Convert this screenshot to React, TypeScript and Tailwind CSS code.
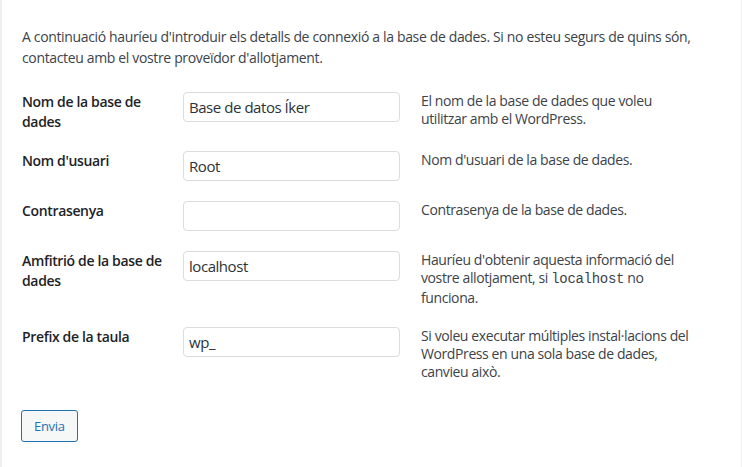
import React from 'react';

const font = { fontFamily: '"Segoe UI", "Open Sans", "Noto Sans", sans-serif' };

interface Row {
  label: React.ReactNode;
  value: string;
  description: React.ReactNode;
}

const rows: Row[] = [
  {
    label: (
      <>
        Nom de la base de
        <br />
        dades
      </>
    ),
    value: 'Base de datos Íker',
    description: (
      <>
        El nom de la base de dades que voleu
        <br />
        utilitzar amb el WordPress.
      </>
    ),
  },
  {
    label: "Nom d'usuari",
    value: 'Root',
    description: "Nom d'usuari de la base de dades.",
  },
  {
    label: 'Contrasenya',
    value: '',
    description: 'Contrasenya de la base de dades.',
  },
  {
    label: (
      <>
        Amfitrió de la base de
        <br />
        dades
      </>
    ),
    value: 'localhost',
    description: (
      <>
        Hauríeu d'obtenir aquesta informació del
        <br />
        vostre allotjament, si{' '}
        <code className="font-['Liberation_Mono',monospace] text-[14px] tracking-[-0.3px]">localhost</code> no
        <br />
        funciona.
      </>
    ),
  },
  {
    label: 'Prefix de la taula',
    value: 'wp_',
    description: (
      <>
        Si voleu executar múltiples instal·lacions del
        <br />
        WordPress en una sola base de dades,
        <br />
        canvieu això.
      </>
    ),
  },
];

export default function App() {
  return (
    <div className="min-h-screen bg-[#f0f0f1] flex" style={font}>
      <div className="ml-[2px] w-[739px] min-h-[467px] bg-white pl-[20px] pt-[26px] text-[#3c434a] tracking-[-0.35px]">
        <p className="text-[14px] leading-[21px] mb-[14px]">
          A continuació hauríeu d'introduir els detalls de connexió a la base de dades. Si no esteu segurs de quins són,
          <br />
          contacteu amb el vostre proveïdor d'allotjament.
        </p>

        <div className="flex flex-col">
          {rows.map((row, i) => (
            <div key={i} className="flex items-start">
              <div className="w-[161px] py-[10px] text-[14px] leading-[19.6px] font-semibold text-[#1d2327]">
                {row.label}
              </div>
              <div className="w-[238px] py-[10px]">
                <input
                  type="text"
                  defaultValue={row.value}
                  className="w-[217px] h-[30px] px-[5px] border border-[#dcdcde] rounded-[4px] text-[15px] tracking-[-0.45px] text-[#2c3338] outline-none"
                  style={font}
                />
              </div>
              <div className="py-[10px] text-[14px] leading-[18.2px] tracking-[-0.4px] text-[#3c434a]">
                {row.description}
              </div>
            </div>
          ))}
        </div>

        <div className="mt-[19px] -ml-[1px]">
          <button className="h-[32px] px-[12px] border border-[#2271b1] rounded-[3px] bg-[#f6f7f7] text-[13px] tracking-[-0.3px] text-[#2271b1]">
            Envia
          </button>
        </div>
      </div>
    </div>
  );
}
